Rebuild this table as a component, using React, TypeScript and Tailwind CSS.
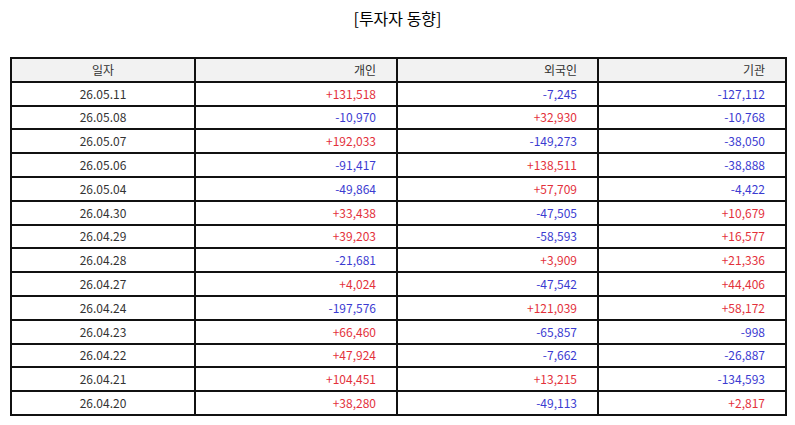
const rows: [string, string, string, string][] = [
  ["26.05.11", "+131,518", "-7,245", "-127,112"],
  ["26.05.08", "-10,970", "+32,930", "-10,768"],
  ["26.05.07", "+192,033", "-149,273", "-38,050"],
  ["26.05.06", "-91,417", "+138,511", "-38,888"],
  ["26.05.04", "-49,864", "+57,709", "-4,422"],
  ["26.04.30", "+33,438", "-47,505", "+10,679"],
  ["26.04.29", "+39,203", "-58,593", "+16,577"],
  ["26.04.28", "-21,681", "+3,909", "+21,336"],
  ["26.04.27", "+4,024", "-47,542", "+44,406"],
  ["26.04.24", "-197,576", "+121,039", "+58,172"],
  ["26.04.23", "+66,460", "-65,857", "-998"],
  ["26.04.22", "+47,924", "-7,662", "-26,887"],
  ["26.04.21", "+104,451", "+13,215", "-134,593"],
  ["26.04.20", "+38,280", "-49,113", "+2,817"],
];

const cell = "border-2 border-[#111] p-0";

function Num({ v }: { v: string }) {
  const color = v.startsWith("+") ? "text-[#e3313b]" : "text-[#3b3bd1]";
  return <td className={`${cell} text-right pr-[20px] ${color}`}>{v}</td>;
}

export default function App() {
  return (
    <div
      className="w-[795px] h-[425px] bg-white text-[#333]"
      style={{ fontFamily: '"Noto Sans CJK KR", "Noto Sans", sans-serif' }}
    >
      <div className="h-[57px] pt-[5px] text-center text-[16px] text-black leading-[26px]">[투자자 동향]</div>
      <table className="ml-[10px] w-[775px] border-collapse text-[12px] leading-none table-fixed">
        <colgroup>
          <col className="w-[184px]" />
          <col className="w-[202px]" />
          <col className="w-[201px]" />
          <col className="w-[188px]" />
        </colgroup>
        <thead>
          <tr className="h-[23.8px] bg-[#f2f2f2]">
            <th className={`${cell} font-normal text-center`}>일자</th>
            <th className={`${cell} font-normal text-right pr-[20px]`}>개인</th>
            <th className={`${cell} font-normal text-right pr-[20px]`}>외국인</th>
            <th className={`${cell} font-normal text-right pr-[20px]`}>기관</th>
          </tr>
        </thead>
        <tbody>
          {rows.map((r) => (
            <tr key={r[0]} className="h-[23.8px]">
              <td className={`${cell} text-center`}>{r[0]}</td>
              <Num v={r[1]} />
              <Num v={r[2]} />
              <Num v={r[3]} />
            </tr>
          ))}
        </tbody>
      </table>
    </div>
  );
}
